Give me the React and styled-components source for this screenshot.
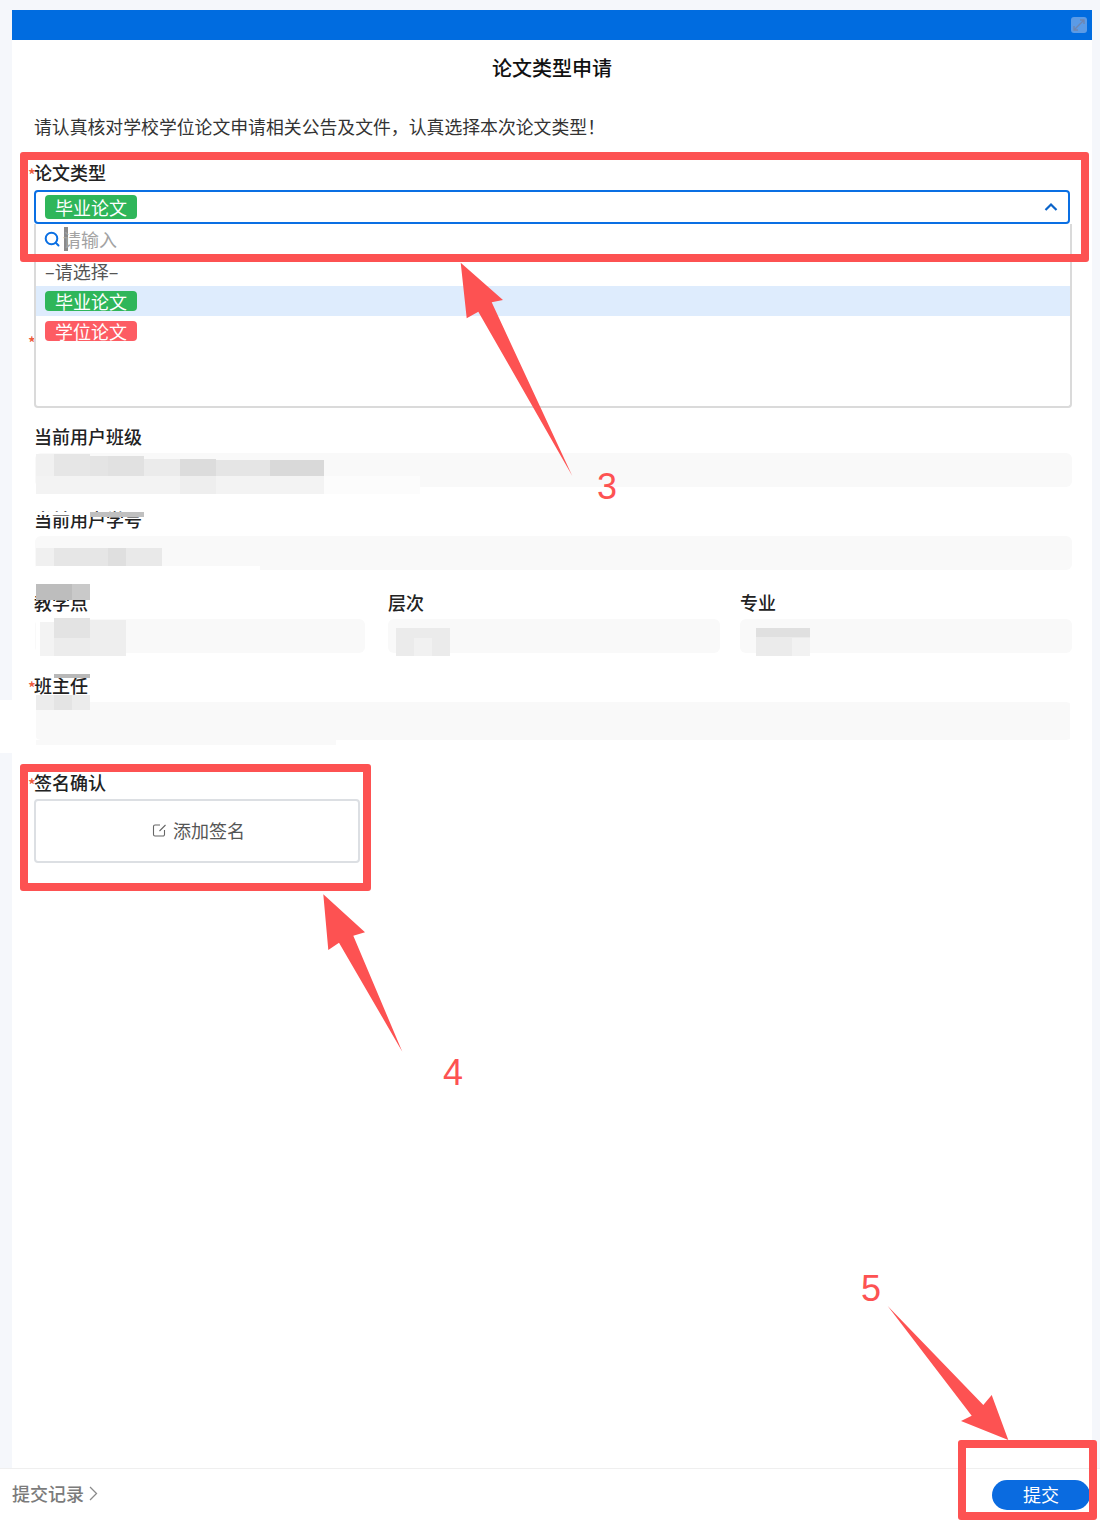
import React from 'react'
import styled, { createGlobalStyle } from 'styled-components'

const annotationRed = '#fd5252'
const primaryBlue = '#006ce0'

const GlobalStyle = createGlobalStyle`
    * { box-sizing: border-box; }
    body {
        margin: 0;
        background: #f5f7fb;
        font-family: "Noto Sans CJK SC", "Liberation Sans", sans-serif;
        color: #222;
    }
`

const Page = styled.div`
    position: relative;
    width: 1100px;
    height: 1520px;
    overflow: hidden;
    display: flex;
    flex-direction: column;
`

const ModalWindow = styled.div`
    flex: 1;
    margin: 10px 8px 0 12px;
    background: #fff;
    display: flex;
    flex-direction: column;
`

const TopBar = styled.div`
    height: 30px;
    background: ${primaryBlue};
    display: flex;
    align-items: center;
    justify-content: flex-end;
    padding-right: 5px;
`

const ExpandButton = styled.div`
    width: 16px;
    height: 16px;
    border-radius: 3px;
    background: #5b9be6;
    display: flex;
    align-items: center;
    justify-content: center;
`

const Title = styled.h1`
    margin: 18px 0 0;
    height: 20px;
    font-size: 20px;
    line-height: 20px;
    font-weight: 500;
    text-align: center;
    color: #111;
`

const Form = styled.div`
    padding: 0 20px 0 23px;
`

const Intro = styled.p`
    margin: 38px 0 27px -1px;
    height: 20px;
    font-size: 17.85px;
    line-height: 20px;
    color: #333;
    white-space: nowrap;
`

const Field = styled.div`
    position: relative;
    margin-bottom: ${props => props.$after ?? 23}px;
`

const Label = styled.div`
    position: relative;
    height: 18px;
    margin-left: ${props => (props.$flush ? 0 : -1)}px;
    font-size: 18px;
    line-height: 18px;
    font-weight: 500;
    color: #222;
    white-space: nowrap;

    ${props => props.$required && `
        &::before {
            content: "*";
            position: absolute;
            left: -6px;
            top: 2px;
            font-size: 16px;
            line-height: 18px;
            color: #ee5a3c;
        }
    `}
`

const ReadonlyInput = styled.div`
    margin-top: 8px;
    height: ${props => props.$height ?? 34}px;
    background: #f9f9f9;
    border-radius: 6px;
`

const Columns = styled.div`
    display: grid;
    grid-template-columns: 353px 352px 332px;
`

const Column = styled.div`
    padding-right: ${props => props.$gap ?? 0}px;
`

const SelectBox = styled.div`
    margin: 9px 0 0 -1px;
    width: 1036px;
    height: 34px;
    border: 2px solid #0a6fe3;
    border-radius: 4px;
    display: flex;
    align-items: center;
    justify-content: space-between;
    padding: 0 10px 0 9px;
`

const Tag = styled.span`
    display: inline-block;
    width: 92px;
    height: ${props => props.$height ?? 20}px;
    line-height: ${props => props.$height ?? 20}px;
    border-radius: 4px;
    background: ${props => props.$color};
    color: #fff;
    font-size: 18px;
    text-align: center;
`

const Dropdown = styled.div`
    position: absolute;
    top: 61px;
    left: -1px;
    width: 1038px;
    height: 184px;
    background: #fff;
    border: 2px solid #dadada;
    border-top: none;
    border-radius: 0 0 4px 4px;
    z-index: 2;
`

const SearchRow = styled.div`
    height: 32px;
    display: flex;
    align-items: center;
    padding: 0 0 2px 8px;
    gap: 4px;
`

const Caret = styled.span`
    width: 4px;
    height: 24px;
    margin-right: -9px;
    background: #8a8a8a;
`

const Placeholder = styled.span`
    font-size: 18px;
    line-height: 20px;
    color: #a3a3a3;
`

const OptionRow = styled.div`
    height: ${props => props.$height ?? 30}px;
    padding-left: 9px;
    display: flex;
    align-items: center;
    background: ${props => (props.$active ? '#deecfd' : 'transparent')};
`

const OptionText = styled.span`
    font-size: 18px;
    line-height: 20px;
    color: #555;
`

const SignBox = styled.div`
    margin: 8px 0 0 -1px;
    width: 326px;
    height: 64px;
    border: 2px solid #dcdfe3;
    border-radius: 4px;
    padding: 0 0 2px 3px;
    display: flex;
    align-items: center;
    justify-content: center;
    gap: 6px;
    font-size: 18px;
    color: #555;
`

const Footer = styled.div`
    height: 52px;
    flex-shrink: 0;
    background: #fff;
    border-top: 1px solid #efefef;
    display: flex;
    align-items: center;
    justify-content: space-between;
    padding: 0 10px 0 12px;
`

const RecordLink = styled.div`
    display: flex;
    align-items: center;
    gap: 5px;
    padding-bottom: 3px;
    font-size: 18px;
    font-weight: 500;
    color: #7b7b7b;
`

const SubmitButton = styled.button`
    width: 98px;
    height: 30px;
    border: none;
    border-radius: 15px;
    background: #0a6be0;
    color: #fff;
    font-family: inherit;
    font-size: 18px;
    line-height: 28px;
    padding: 0 0 2px;
`

const Overlay = styled.svg`
    position: absolute;
    inset: 0;
    z-index: 3;
    pointer-events: none;
`

const CalloutBox = styled.div`
    position: absolute;
    left: ${props => props.$x}px;
    top: ${props => props.$y}px;
    width: ${props => props.$w}px;
    height: ${props => props.$h}px;
    border: 8px solid ${annotationRed};
    border-radius: 3px;
    z-index: 4;
`

const StepNumber = styled.span`
    position: absolute;
    left: ${props => props.$x}px;
    top: ${props => props.$y}px;
    font-family: "Liberation Sans", sans-serif;
    font-size: 36px;
    line-height: 40px;
    color: ${annotationRed};
    z-index: 4;
`

// redacted areas in the screenshot: x, y, w, h, colour
const mosaicTiles = [
    [36, 454, 18, 22, '#f1f1f1'], [54, 454, 36, 22, '#e6e6e6'], [90, 456, 18, 20, '#e4e4e4'],
    [108, 456, 36, 20, '#e1e1e1'], [144, 459, 36, 17, '#ebebeb'], [180, 459, 36, 17, '#dcdcdc'],
    [216, 460, 54, 16, '#e5e5e5'], [270, 460, 54, 16, '#d9d9d9'],
    [36, 476, 288, 18, '#f3f3f3'], [180, 476, 36, 18, '#eeeeee'], [324, 476, 96, 18, '#fcfcfc'],
    [36, 566, 224, 9, '#ffffff'],
    [36, 548, 18, 18, '#f0f0f0'], [54, 548, 54, 18, '#e6e6e6'], [108, 548, 18, 18, '#dfdfdf'], [126, 548, 36, 18, '#e9e9e9'],
    [36, 512, 54, 3, '#ffffff'], [90, 512, 54, 5, '#c0c0c0'],
    [36, 584, 36, 16, '#bdbdbd'], [72, 584, 18, 16, '#c9c9c9'],
    [36, 618, 18, 38, '#ffffff'], [40, 622, 14, 34, '#f3f3f3'], [54, 618, 36, 20, '#e3e3e3'], [54, 638, 36, 18, '#ececec'], [90, 620, 36, 36, '#eeeeee'],
    [396, 628, 54, 28, '#ebebeb'], [414, 638, 18, 18, '#f1f1f1'],
    [756, 628, 54, 28, '#ebebeb'], [792, 638, 18, 18, '#f2f2f2'], [756, 628, 54, 9, '#e0e0e0'],
    [54, 674, 36, 4, '#b8b8b8'], [36, 695, 54, 15, '#ececec'], [54, 695, 18, 15, '#e4e4e4'],
    [36, 740, 300, 5, '#f9f9f9'], [0, 700, 17, 53, '#ffffff'], [33, 702, 3, 38, '#ffffff'], [1070, 702, 3, 38, '#ffffff'],
]

const arrows = [
    '460.7,262.7 503,300 491.7,302.3 572.3,476 478.3,311.7 466.7,318.3',
    '323.3,894.3 365,932.3 353.3,935.7 402.3,1051.7 339,942.7 328.3,950',
    '887.7,1306 983.3,1405 991.7,1395 1008.3,1440 961,1421 971.7,1415.7',
]

const SearchIcon = () => (
    <svg width="16" height="16" viewBox="0 0 16 16" fill="none" stroke="#0a6fe3" strokeWidth="2" strokeLinecap="round">
        <circle cx="7.5" cy="7.5" r="5.8" />
        <path d="M12 12l2.5 2.5" />
    </svg>
)

const ChevronUp = () => (
    <svg width="14" height="10" viewBox="0 0 14 10" fill="none" stroke="#0a63c9" strokeWidth="2.2">
        <path d="M1.5 8L7 2.5 12.5 8" />
    </svg>
)

const ChevronRight = () => (
    <svg width="9" height="15" viewBox="0 0 9 15" fill="none" stroke="#8a8a8a" strokeWidth="1.3">
        <path d="M1 1l6.5 6.5L1 14" />
    </svg>
)

const EditIcon = () => (
    <svg width="15" height="15" viewBox="0 0 15 15" fill="none" stroke="#666" strokeWidth="1.1">
        <path d="M8 2H3a1.5 1.5 0 0 0-1.5 1.5v8A1.5 1.5 0 0 0 3 13h8a1.5 1.5 0 0 0 1.5-1.5V7" />
        <path d="M7.5 8l6-6" />
    </svg>
)

const ExpandIcon = () => (
    <svg width="14" height="14" viewBox="0 0 14 14" fill="none" stroke="#6f86b0" strokeWidth="1.4">
        <path d="M2 12l10-10M8 2h4v4M2 8v4h4" />
    </svg>
)

const App = () => (
    <Page>
        <GlobalStyle />
        <ModalWindow>
            <TopBar>
                <ExpandButton><ExpandIcon /></ExpandButton>
            </TopBar>
            <Title>论文类型申请</Title>
            <Form>
                <Intro>请认真核对学校学位论文申请相关公告及文件，认真选择本次论文类型！</Intro>

                <Field $after={107}>
                    <Label $required>论文类型</Label>
                    <SelectBox>
                        <Tag $color="#2fb65a" $height={24}>毕业论文</Tag>
                        <ChevronUp />
                    </SelectBox>
                    <Dropdown>
                        <SearchRow>
                            <SearchIcon />
                            <Caret />
                            <Placeholder>请输入</Placeholder>
                        </SearchRow>
                        <OptionRow $height={30}><OptionText>–请选择–</OptionText></OptionRow>
                        <OptionRow $active><Tag $color="#2fb65a">毕业论文</Tag></OptionRow>
                        <OptionRow><Tag $color="#fd5c63">学位论文</Tag></OptionRow>
                    </Dropdown>
                </Field>

                <Field $after={78}>
                    <Label $required />
                </Field>

                <Field>
                    <Label>当前用户班级</Label>
                    <ReadonlyInput />
                </Field>

                <Field>
                    <Label>当前用户学号</Label>
                    <ReadonlyInput />
                </Field>

                <Field>
                    <Columns>
                        <Column $gap={23}>
                            <Label>教学点</Label>
                            <ReadonlyInput />
                        </Column>
                        <Column $gap={20}>
                            <Label $flush>层次</Label>
                            <ReadonlyInput />
                        </Column>
                        <Column>
                            <Label $flush>专业</Label>
                            <ReadonlyInput />
                        </Column>
                    </Columns>
                </Field>

                <Field $after={33}>
                    <Label $required>班主任</Label>
                    <ReadonlyInput $height={38} />
                </Field>

                <Field>
                    <Label $required>签名确认</Label>
                    <SignBox>
                        <EditIcon />
                        添加签名
                    </SignBox>
                </Field>
            </Form>
        </ModalWindow>

        <Footer>
            <RecordLink>
                提交记录
                <ChevronRight />
            </RecordLink>
            <SubmitButton>提交</SubmitButton>
        </Footer>

        <Overlay width="1100" height="1520" viewBox="0 0 1100 1520">
            {mosaicTiles.map(([x, y, w, h, fill], index) => (
                <rect key={index} x={x} y={y} width={w} height={h} fill={fill} />
            ))}
            {arrows.map(points => (
                <polygon key={points} points={points} fill={annotationRed} />
            ))}
        </Overlay>

        <CalloutBox $x={20} $y={152} $w={1069} $h={110} />
        <CalloutBox $x={20} $y={764} $w={351} $h={127} />
        <CalloutBox $x={958} $y={1440} $w={139} $h={80} />

        <StepNumber $x={597} $y={467}>3</StepNumber>
        <StepNumber $x={443} $y={1053}>4</StepNumber>
        <StepNumber $x={861} $y={1269}>5</StepNumber>
    </Page>
)

export default App
